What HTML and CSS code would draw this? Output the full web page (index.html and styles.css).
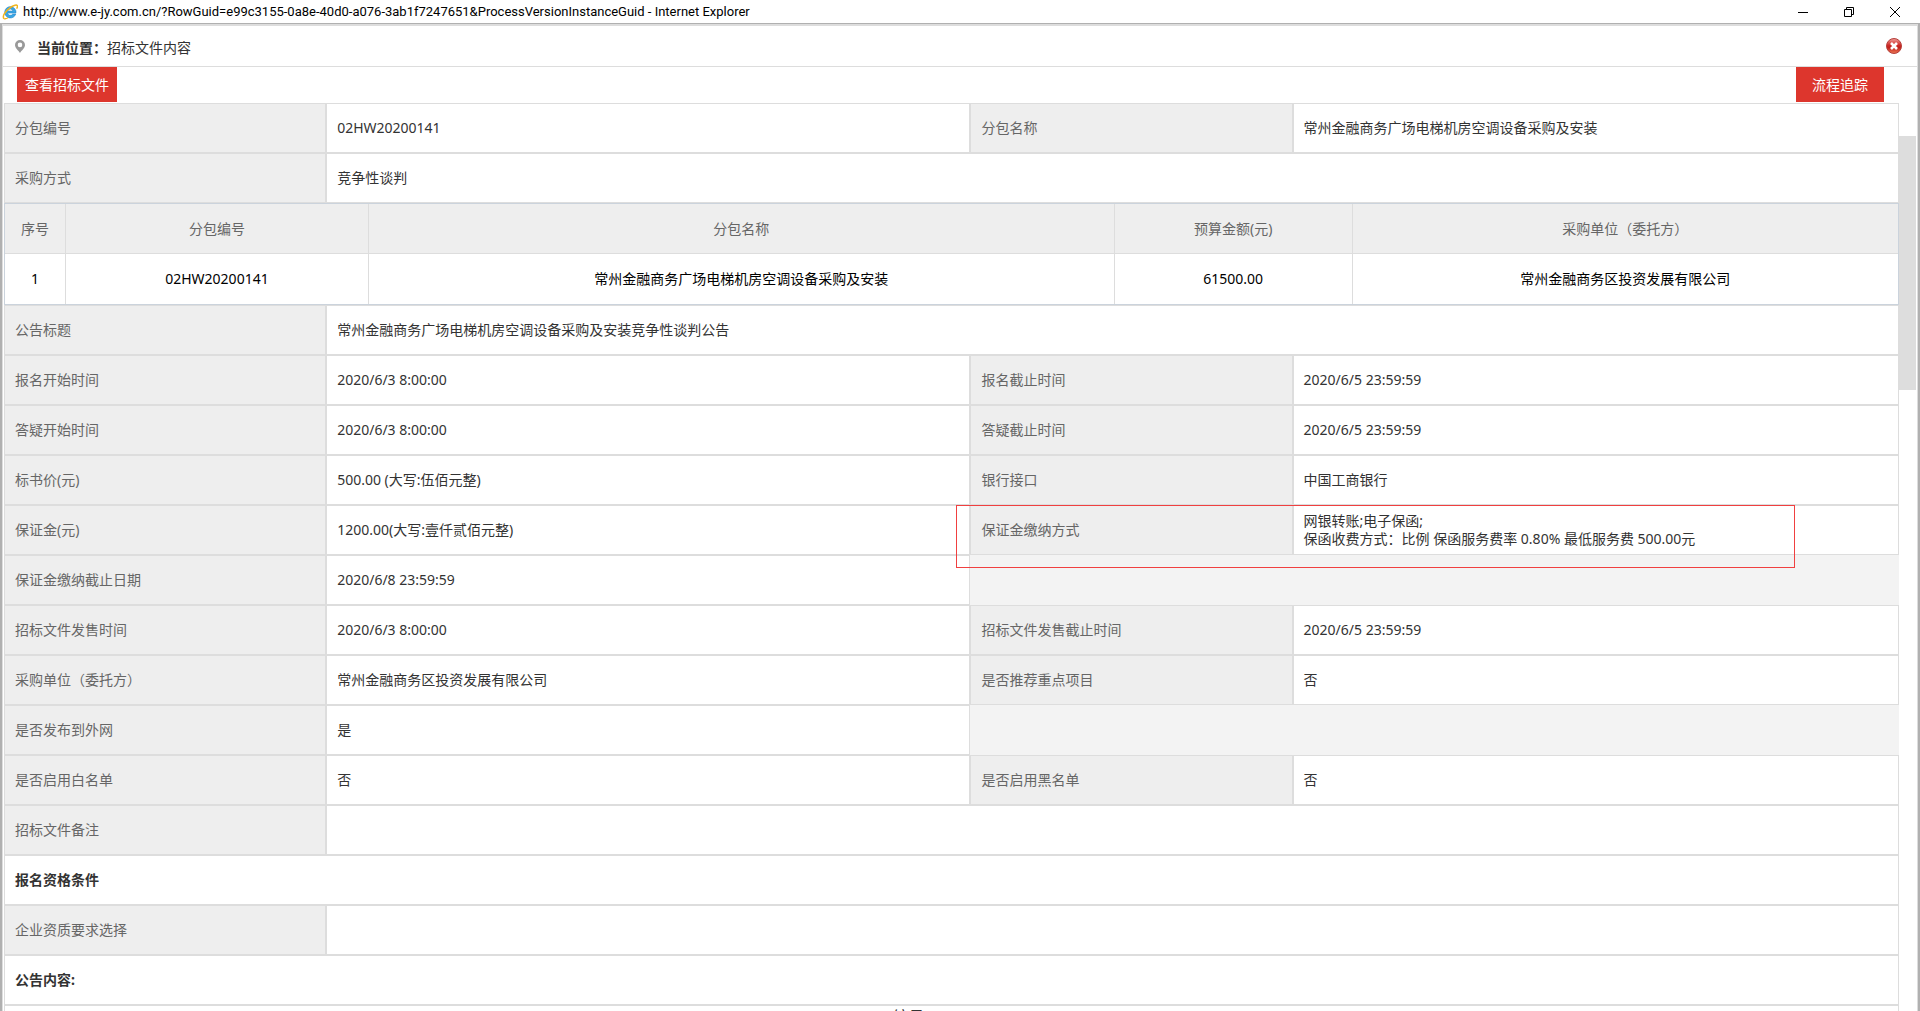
FILE: index.html
```html
<!DOCTYPE html>
<html lang="zh-CN">
<head>
    <meta charset="UTF-8">
    <meta name="viewport" content="width=device-width, initial-scale=1.0">
    <title>招标文件内容</title>
    <link rel="stylesheet" href="styles.css">
</head>
<body>
    <header class="titlebar">
        <svg class="ie-icon" viewBox="0 0 16 16">
            <path d="M8.3 2.6a5.7 5.7 0 1 0 5.5 7.4h-3.2a2.7 2.7 0 0 1-5-.9H14a5.7 5.7 0 0 0-5.7-6.5zM5.7 7a2.7 2.7 0 0 1 5.2 0z" fill="#3aa6e4" stroke="#1c7fc4" stroke-width=".5"/>
            <path d="M2.2 14.6C-.2 13.5 2.5 7.5 8 3.8c3.5-2.3 6.5-3.4 7.3-2.2.5.8 0 2-.7 3.1" fill="none" stroke="#f0b41c" stroke-width="1.5"/>
            <path d="M2.2 14.6c1 .4 2.4 0 3.8-.8" fill="none" stroke="#f0b41c" stroke-width="1.3"/>
        </svg>
        <span class="titlebar-text">http://www.e-jy.com.cn/?RowGuid=e99c3155-0a8e-40d0-a076-3ab1f7247651&amp;ProcessVersionInstanceGuid - Internet Explorer</span>
        <div class="window-buttons">
            <button type="button" aria-label="最小化"><svg viewBox="0 0 10 10"><path d="M0 5.5h10"/></svg></button>
            <button type="button" aria-label="还原"><svg viewBox="0 0 10 10"><path d="M.5 2.5h7v7h-7zM2.5 2.5v-2h7v7h-2"/></svg></button>
            <button type="button" aria-label="关闭"><svg viewBox="0 0 10 10"><path d="M0 0l10 10M10 0L0 10"/></svg></button>
        </div>
    </header>

    <div class="window">
        <div class="location">
            <svg class="pin" viewBox="0 0 10 13"><path d="M5 0a5 5 0 0 0-5 5c0 3 3.5 5.500 5 8 1.5-2.500 5-5 5-8a5 5 0 0 0-5-5zm0 2.600a2.300 2.300 0 1 1 0 4.600 2.300 2.300 0 0 1 0-4.600z" fill="#999" fill-rule="evenodd"/></svg>
            <div class="location-text"><b>当前位置：</b>招标文件内容</div>
            <button type="button" class="close" aria-label="关闭">
                <svg viewBox="0 0 16 16">
                    <defs>
                        <linearGradient id="red" x1="0" y1="0" x2="0" y2="1">
                            <stop offset="0" stop-color="#f0a09c"/>
                            <stop offset=".45" stop-color="#cf2a26"/>
                            <stop offset=".6" stop-color="#c0211c"/>
                            <stop offset="1" stop-color="#ee7a55"/>
                        </linearGradient>
                    </defs>
                    <circle cx="8" cy="8" r="7.5" fill="url(#red)" stroke="#b5403c"/>
                    <path d="M5 5l6 6M11 5l-6 6" stroke="#fff" stroke-width="2.6"/>
                </svg>
            </button>
        </div>

        <div class="body">
            <main class="main">
                <div class="toolbar">
                    <button type="button" class="btn">查看招标文件</button>
                    <button type="button" class="btn btn-wide">流程追踪</button>
                </div>

                <table class="form">
                    <colgroup><col class="c-label"><col class="c-left"><col class="c-label"><col class="c-right"></colgroup>
                    <tr><th>分包编号</th><td>02HW20200141</td><th>分包名称</th><td>常州金融商务广场电梯机房空调设备采购及安装</td></tr>
                    <tr><th>采购方式</th><td colspan="3">竞争性谈判</td></tr>
                </table>

                <table class="list">
                    <colgroup><col class="l-no"><col class="l-code"><col class="l-name"><col class="l-money"><col class="l-unit"></colgroup>
                    <tr><th>序号</th><th>分包编号</th><th>分包名称</th><th>预算金额(元)</th><th>采购单位（委托方）</th></tr>
                    <tr><td>1</td><td>02HW20200141</td><td>常州金融商务广场电梯机房空调设备采购及安装</td><td>61500.00</td><td>常州金融商务区投资发展有限公司</td></tr>
                </table>

                <table class="form">
                    <colgroup><col class="c-label"><col class="c-left"><col class="c-label"><col class="c-right"></colgroup>
                    <tr><th>公告标题</th><td colspan="3">常州金融商务广场电梯机房空调设备采购及安装竞争性谈判公告</td></tr>
                    <tr><th>报名开始时间</th><td>2020/6/3 8:00:00</td><th>报名截止时间</th><td>2020/6/5 23:59:59</td></tr>
                    <tr><th>答疑开始时间</th><td>2020/6/3 8:00:00</td><th>答疑截止时间</th><td>2020/6/5 23:59:59</td></tr>
                    <tr><th>标书价(元)</th><td>500.00 (大写:伍佰元整)</td><th>银行接口</th><td>中国工商银行</td></tr>
                    <tr><th>保证金(元)</th><td>1200.00(大写:壹仟贰佰元整)</td><th class="marked">保证金缴纳方式<span class="mark"></span></th><td>网银转账;电子保函;<br>保函收费方式：比例 保函服务费率 0.80% 最低服务费 500.00元</td></tr>
                    <tr><th>保证金缴纳截止日期</th><td>2020/6/8 23:59:59</td><td class="empty" colspan="2"></td></tr>
                    <tr><th>招标文件发售时间</th><td>2020/6/3 8:00:00</td><th>招标文件发售截止时间</th><td>2020/6/5 23:59:59</td></tr>
                    <tr><th>采购单位（委托方）</th><td>常州金融商务区投资发展有限公司</td><th>是否推荐重点项目</th><td>否</td></tr>
                    <tr><th>是否发布到外网</th><td>是</td><td class="empty" colspan="2"></td></tr>
                    <tr><th>是否启用白名单</th><td>否</td><th>是否启用黑名单</th><td>否</td></tr>
                    <tr><th>招标文件备注</th><td colspan="3"></td></tr>
                    <tr><td class="section" colspan="4">报名资格条件</td></tr>
                    <tr><th>企业资质要求选择</th><td colspan="3"></td></tr>
                    <tr><td class="section" colspan="4">公告内容:</td></tr>
                    <tr><td class="notice" colspan="4">编号</td></tr>
                </table>
            </main>
            <div class="scrollbar"><div class="thumb"></div></div>
        </div>
    </div>
</body>
</html>
```

FILE: styles.css
```css
* {
    box-sizing: border-box;
}
body {
    margin: 0;
    height: 100vh;
    display: flex;
    flex-direction: column;
    overflow: hidden;
    background: #fff;
    color: #333;
    font-family: "Noto Sans", "Noto Sans CJK SC", sans-serif;
    font-size: 14px;
    line-height: 18px;
}
button {
    padding: 0;
    border: none;
    background: none;
    font: inherit;
    cursor: pointer;
}
svg {
    display: block;
}

/* 标题栏 */
.titlebar {
    display: flex;
    align-items: center;
    flex: none;
    height: 23px;
    padding-left: 2px;
    color: #000;
    font-family: Roboto, sans-serif;
    font-size: 13px;
}
.ie-icon {
    width: 16px;
    height: 16px;
    margin-right: 5px;
}
.window-buttons {
    display: flex;
    gap: 36px;
    margin-left: auto;
    padding-right: 20px;
}
.window-buttons svg {
    width: 10px;
    height: 10px;
    fill: none;
    stroke: #000;
    overflow: visible;
}

.window {
    flex: 1;
    min-height: 0;
    display: flex;
    flex-direction: column;
    border: solid #b0b0b0;
    border-width: 1px 2px 0;
    box-shadow: inset 1px 2px #ddd, inset -1px 0 #ddd;
    padding: 2px 1px 0;
}
.location {
    display: flex;
    align-items: center;
    flex: none;
    height: 41px;
    padding: 0 15px 0 12px;
    border-bottom: 1px solid #ddd;
}
.location-text {
    padding-top: 3px;
}
.pin {
    width: 10px;
    height: 13px;
    margin-right: 12px;
}
.close {
    margin-left: auto;
}
.close svg {
    width: 16px;
    height: 16px;
}

.body {
    flex: 1;
    min-height: 0;
    display: flex;
}
.main {
    flex: 1;
    min-width: 0;
    padding-left: 1px;
}
.toolbar {
    display: flex;
    justify-content: space-between;
    height: 36px;
    padding: 0 15px 0 13px;
}
.btn {
    height: 35px;
    padding: 0 8px;
    background: #dd362d;
    color: #fff;
}
.btn-wide {
    padding: 0 16px;
}

/* 表单 */
table {
    width: 100%;
    table-layout: fixed;
    border-spacing: 0;
}
th {
    font-weight: normal;
    color: #666;
    background: #eee;
}
.form th,
.form td {
    height: 50px;
    padding: 0 10px;
    border: 1px solid #ddd;
    text-align: left;
}
.c-label {
    width: 17%;
}
.c-left {
    width: 34%;
}
.c-right {
    width: 32%;
}
.form .empty {
    border: none;
    background: #f3f3f3;
}
.form .section {
    font-weight: bold;
}
.form .notice {
    height: 60px;
    padding: 2px 96px 0 10px;
    vertical-align: top;
    text-align: center;
    font-size: 16px;
}

/* 分包列表 */
.list {
    border: 1px solid #cbd3dc;
}
.list th,
.list td {
    height: 50px;
    padding: 0 10px;
    border-right: 1px solid #ddd;
    text-align: center;
}
.list th {
    border-bottom: 1px solid #ddd;
}
.list td {
    color: #000;
}
.list th:last-child,
.list td:last-child {
    border-right: none;
}
.l-no {
    width: 61px;
}
.l-code {
    width: 16%;
}
.l-name {
    width: 39.4%;
}
.l-money {
    width: 238px;
}

/* 红框标注 */
.marked {
    position: relative;
}
.mark {
    position: absolute;
    z-index: 1;
    top: -1px;
    left: -15px;
    width: 839px;
    height: 63px;
    border: 1px solid #f04040;
}

.scrollbar {
    flex: none;
    width: 18px;
    padding: 69px 1px 0 0;
}
.thumb {
    height: 254px;
    background: #ddd;
}
```
